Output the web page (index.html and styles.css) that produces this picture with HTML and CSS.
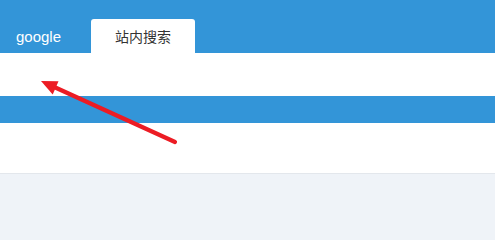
FILE: index.html
```html
<!DOCTYPE html>
<html lang="zh-CN">
<head>
<meta charset="utf-8">
<link rel="stylesheet" href="styles.css">
</head>
<body>
<div class="page">
  <header class="topbar">
    <a class="nav-item">google</a>
    <a class="nav-item active">站内搜索</a>
  </header>
  <div class="search-row"></div>
  <div class="band"></div>
  <div class="panel"></div>
  <div class="footer-area"></div>
  <svg class="arrow" width="495" height="220" viewBox="0 0 495 220">
    <line x1="175" y1="142" x2="52" y2="86" stroke="#ec1c24" stroke-width="4.2" stroke-linecap="round"/>
    <polygon points="41,81 58.5,81.2 52.7,94.5" fill="#ec1c24"/>
  </svg>
</div>
</body>
</html>
```
FILE: styles.css
```css
html, body {
  margin: 0;
  padding: 0;
  background: #eff3f8;
}
.page {
  position: relative;
  width: 495px;
  height: 220px;
  overflow: hidden;
  font-family: "Liberation Sans", "Noto Sans CJK SC", sans-serif;
}
.topbar {
  height: 53px;
  background: #3395d8;
  display: flex;
  align-items: flex-end;
  box-sizing: border-box;
}
.nav-item {
  display: block;
  height: 34px;
  line-height: 36px;
  color: #ffffff;
  font-size: 15px;
  padding-left: 16px;
  width: 75px;
}
.nav-item.active {
  width: 104px;
  padding-left: 0;
  text-align: center;
  background: #ffffff;
  color: #333333;
  font-size: 14px;
  line-height: 35px;
  border-radius: 3px 3px 0 0;
  font-family: "Noto Sans CJK SC", sans-serif;
}
.search-row {
  height: 43px;
  background: #ffffff;
}
.band {
  height: 27px;
  background: #3395d8;
}
.panel {
  height: 50px;
  background: #ffffff;
  border-bottom: 1px solid #e3e7ec;
}
.footer-area {
  height: 46px;
}
.arrow {
  position: absolute;
  left: 0;
  top: 0;
  pointer-events: none;
}
```
